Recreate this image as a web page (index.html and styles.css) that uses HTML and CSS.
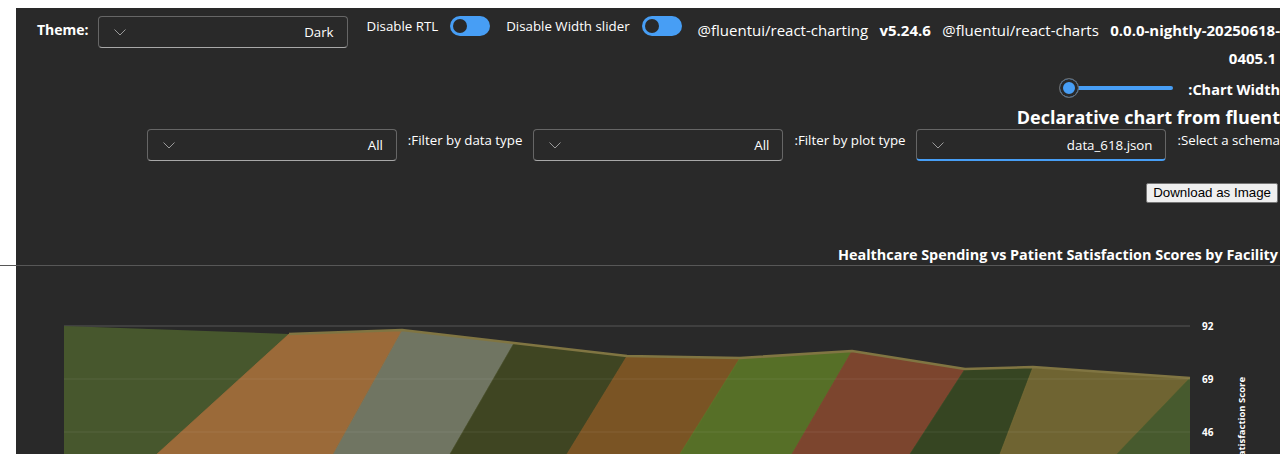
FILE: index.html
```html
<!DOCTYPE html>
<html lang="en">
<head>
<meta charset="utf-8">
<title>Declarative chart</title>
<link rel="stylesheet" href="styles.css">
</head>
<body>
<div class="page">
  <div class="toprow">
    <label class="theme-label">Theme:</label>
    <div class="dropdown">
      <span class="dd-value">Dark</span>
      <svg class="chev" width="12" height="7" viewBox="0 0 12 7"><path d="M0.5 0.5 L6 6 L11.5 0.5" fill="none" stroke="#9a9a9a" stroke-width="1"/></svg>
    </div>
    <div class="switch">
      <span>Disable RTL</span>
      <span class="toggle"><span class="knob"></span></span>
    </div>
    <div class="switch">
      <span>Disable Width slider</span>
      <span class="toggle"><span class="knob"></span></span>
    </div>
    <div class="versions"><span class="pkg">@fluentui/react-charting</span> <b class="ver">v5.24.6</b> <span class="pkg">@fluentui/react-charts</span> <b class="ver">0.0.0-nightly-20250618-0405.1</b></div>
  </div>

  <div class="slider-row">
    <span class="slider-label">Chart Width:</span>
    <div class="slider">
      <div class="rail"></div>
      <div class="thumb"></div>
    </div>
  </div>

  <div class="heading">Declarative chart from fluent</div>

  <div class="filter-row">
    <span class="field-label">Select a schema:</span>
    <div class="dropdown focused">
      <span class="dd-value">data_618.json</span>
      <svg class="chev" width="12" height="7" viewBox="0 0 12 7"><path d="M0.5 0.5 L6 6 L11.5 0.5" fill="none" stroke="#9a9a9a" stroke-width="1"/></svg>
    </div>
    <span class="field-label">Filter by plot type:</span>
    <div class="dropdown">
      <span class="dd-value">All</span>
      <svg class="chev" width="12" height="7" viewBox="0 0 12 7"><path d="M0.5 0.5 L6 6 L11.5 0.5" fill="none" stroke="#9a9a9a" stroke-width="1"/></svg>
    </div>
    <span class="field-label">Filter by data type:</span>
    <div class="dropdown">
      <span class="dd-value">All</span>
      <svg class="chev" width="12" height="7" viewBox="0 0 12 7"><path d="M0.5 0.5 L6 6 L11.5 0.5" fill="none" stroke="#9a9a9a" stroke-width="1"/></svg>
    </div>
  </div>

  <div class="download-row">
    <button class="download">Download as Image</button>
  </div>

  <div class="chart-title">Healthcare Spending vs Patient Satisfaction Scores by Facility</div>
  <div class="divider"></div>

  <svg class="chart" width="1264" height="188" viewBox="16 266 1264 188">
    <line x1="64" y1="326" x2="1190" y2="326" stroke="#575757" stroke-width="1"/>
    <polygon fill="#47572d" points="64,326 289,334 157,454 64,454"/>
    <polygon fill="#9b6a39" points="289,334 402,330 333,454 157,454"/>
    <polygon fill="#707562" points="402,330 514,343 450,454 333,454"/>
    <polygon fill="#3f4522" points="514,343 627,356 567,454 450,454"/>
    <polygon fill="#7a5424" points="627,356 740,358 680,454 567,454"/>
    <polygon fill="#566f27" points="740,358 852,351 792,454 680,454"/>
    <polygon fill="#7c452e" points="852,351 965,369 910,454 792,454"/>
    <polygon fill="#364522" points="965,369 1033,367 1000,454 910,454"/>
    <polygon fill="#6f6432" points="1033,367 1190,378 1117,454 1000,454"/>
    <polygon fill="#475a2e" points="1190,378 1190,454 1117,454"/>
    <g fill="none" stroke-width="1" stroke-opacity="0.55">
      <line x1="289" y1="334" x2="157" y2="454" stroke="#b07a40"/>
      <line x1="402" y1="330" x2="333" y2="454" stroke="#a88048"/>
      <line x1="514" y1="343" x2="450" y2="454" stroke="#5a6035"/>
      <line x1="627" y1="356" x2="567" y2="454" stroke="#8e6228"/>
      <line x1="740" y1="358" x2="680" y2="454" stroke="#6a8a2c"/>
      <line x1="852" y1="351" x2="792" y2="454" stroke="#915235"/>
      <line x1="965" y1="369" x2="910" y2="454" stroke="#45582a"/>
      <line x1="1033" y1="367" x2="1000" y2="454" stroke="#857838"/>
      <line x1="1190" y1="378" x2="1117" y2="454" stroke="#5a7030"/>
    </g>
    <polyline fill="none" stroke="#807542" stroke-width="2.5" stroke-linejoin="round" points="289,334 402,330 514,343 627,356 740,358 852,351 965,369 1033,367 1190,378"/>
    <line x1="64" y1="379" x2="1190" y2="379" stroke="#ffffff" stroke-opacity="0.08"/>
    <line x1="64" y1="432" x2="1190" y2="432" stroke="#ffffff" stroke-opacity="0.08"/>
    <g class="tick">
      <text x="1202" y="330">92</text>
      <text x="1202" y="383">69</text>
      <text x="1202" y="436">46</text>
    </g>
    <text class="axis-title" x="1245" y="377" transform="rotate(-90 1245 377)" text-anchor="end">Satisfaction Score</text>
  </svg>
</div>
</body>
</html>
```

FILE: styles.css
```css
html, body {
  margin: 0;
  padding: 0;
  height: 100%;
  overflow: hidden;
  background: #ffffff;
}

body {
  font-family: "Open Sans", "Noto Sans", sans-serif;
  color: #ffffff;
}

.page {
  margin: 8px 0 0 16px;
  width: 1264px;
  height: 446px;
  background: #292929;
}

.toprow {
  display: flex;
  align-items: flex-start;
  padding: 8px 0 0 21px;
  font-size: 13.3px;
}

.theme-label {
  font-size: 14px;
  font-weight: 700;
  line-height: 20px;
  margin-top: 4px;
  margin-right: 9px;
}

.dropdown {
  flex: none;
  width: 250px;
  height: 32px;
  box-sizing: border-box;
  border: 1px solid #666666;
  border-bottom-color: #a8a8a8;
  border-radius: 4px;
  display: flex;
  align-items: center;
  justify-content: space-between;
  direction: rtl;
  padding: 0 13px 0 15px;
  font-size: 13.3px;
  color: #ffffff;
}

.dropdown.focused {
  border-bottom: 2px solid #479ef5;
}

.chev {
  display: block;
  margin-top: 1px;
}

.switch {
  display: flex;
  align-items: center;
  gap: 12px;
  height: 20px;
  margin-left: 19px;
  line-height: 20px;
}

.switch + .switch {
  margin-left: 16px;
}

.toggle {
  width: 40px;
  height: 20px;
  box-sizing: border-box;
  border-radius: 10px;
  background: #479ef5;
  display: flex;
  align-items: center;
  padding: 0 3px;
}

.knob {
  width: 14px;
  height: 14px;
  border-radius: 50%;
  background: #292929;
}

.versions {
  flex: 1;
  margin-left: 16px;
  font-size: 15px;
  line-height: 28px;
  text-align: justify;
  text-align-last: right;
}

.pkg {
  margin-right: 4px;
}

.ver {
  margin-right: 4px;
}

.slider-row {
  display: flex;
  direction: rtl;
  align-items: center;
  gap: 15px;
  height: 24px;
  margin-top: 4px;
}

.slider-label {
  font-size: 14.5px;
  font-weight: 700;
  line-height: 20px;
  padding-top: 4px;
  white-space: nowrap;
}

.slider {
  position: relative;
  width: 114px;
  height: 20px;
  display: flex;
  align-items: center;
}

.rail {
  width: 104px;
  height: 4px;
  border-radius: 2px;
  background: #479ef5;
}

.thumb {
  position: absolute;
  left: 0;
  top: 0;
  width: 20px;
  height: 20px;
  box-sizing: border-box;
  border-radius: 50%;
  background: #479ef5;
  border: 1px solid #6b6b6b;
  box-shadow: inset 0 0 0 3px #292929;
}

.heading {
  direction: rtl;
  font-size: 18px;
  font-weight: 700;
  line-height: 24px;
  white-space: nowrap;
  margin-top: 5px;
}

.filter-row {
  display: flex;
  direction: rtl;
  align-items: flex-start;
  gap: 11px;
}

.field-label {
  font-size: 13.3px;
  line-height: 20px;
  margin-top: 1px;
  white-space: nowrap;
}

.download-row {
  display: flex;
  justify-content: flex-end;
  padding-right: 2px;
  margin-top: 22px;
}

.download {
  font-family: "Liberation Sans", Arial, sans-serif;
  font-size: 13.33px;
  color: #000000;
  background: #efefef;
  border: 1px solid #767676;
  border-radius: 2px;
  padding: 1px 6px;
  height: 20px;
  line-height: 16px;
}

.chart-title {
  text-align: right;
  padding-right: 2px;
  margin-top: 41px;
  font-size: 14.4px;
  font-weight: 700;
  line-height: 21px;
  white-space: nowrap;
}

.divider {
  margin-left: -16px;
  width: 1280px;
  height: 1px;
  background: #575757;
}

.chart {
  display: block;
}

.tick text {
  fill: #ffffff;
  font-size: 10px;
  font-weight: 700;
}

.axis-title {
  fill: #ffffff;
  font-size: 9.5px;
  font-weight: 700;
}
```
